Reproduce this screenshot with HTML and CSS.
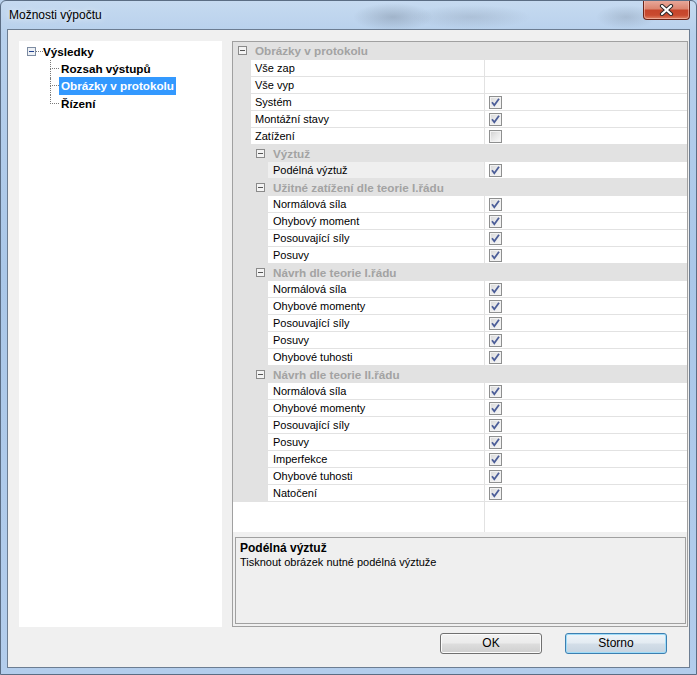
FILE: index.html
```html
<!DOCTYPE html>
<html lang="cs">
<head>
<meta charset="utf-8">
<title>Možnosti výpočtu</title>
<link rel="stylesheet" href="styles.css">
</head>
<body>
<div class="window">
  <div class="titlebar">
    <span class="title">Možnosti výpočtu</span>
    <div class="close">
      <svg width="15" height="12" viewBox="0 0 15 12"><path d="M3 2 L12 10 M12 2 L3 10" stroke="#2e2a2a" stroke-width="4.2" stroke-linecap="round"/><path d="M3 2 L12 10 M12 2 L3 10" stroke="#ffffff" stroke-width="2.2" stroke-linecap="round"/></svg>
    </div>
  </div>
  <div class="client">
    <div class="main">
      <div class="tree">
        <div class="node root">
          <span class="texp"><svg width="9" height="9" viewBox="0 0 9 9"><rect x="0.5" y="0.5" width="8" height="8" fill="#eef1f5" stroke="#7d8ca2"/><path d="M2 4.5 H7" stroke="#1f3f8e" stroke-width="1"/></svg></span>
          <span class="tconn"></span>
          <span class="tlabel">Výsledky</span>
        </div>
        <div class="children">
          <div class="node"><span class="branch"><i></i><i></i></span><span class="tlabel">Rozsah výstupů</span></div>
          <div class="node"><span class="branch"><i></i><i></i></span><span class="tlabel sel">Obrázky v protokolu</span></div>
          <div class="node last"><span class="branch"><i></i><i></i></span><span class="tlabel">Řízení</span></div>
        </div>
      </div>
      <div class="pg">
        <div class="view">
          <div class="row cat first"><span class="exp"><svg width="9" height="9" viewBox="0 0 9 9"><rect x="0.5" y="0.5" width="8" height="8" fill="#f3f3f3" stroke="#8a8a8a"/><path d="M2 4.5 H7" stroke="#555" stroke-width="1"/></svg></span><span class="clabel">Obrázky v protokolu</span></div>
          <div class="row"><span class="gut"></span><span class="lab">Vše zap</span><span class="val"></span></div>
          <div class="row"><span class="gut"></span><span class="lab">Vše vyp</span><span class="val"></span></div>
          <div class="row"><span class="gut"></span><span class="lab">Systém</span><span class="val"><span class="cb on"><svg width="11" height="11" viewBox="0 0 11 11"><path d="M2 5.3 L4.3 8.3 L9 1.8" fill="none" stroke="#4b5d98" stroke-width="1.8"/></svg></span></span></div>
          <div class="row"><span class="gut"></span><span class="lab">Montážní stavy</span><span class="val"><span class="cb on"><svg width="11" height="11" viewBox="0 0 11 11"><path d="M2 5.3 L4.3 8.3 L9 1.8" fill="none" stroke="#4b5d98" stroke-width="1.8"/></svg></span></span></div>
          <div class="row"><span class="gut"></span><span class="lab">Zatížení</span><span class="val"><span class="cb"></span></span></div>

          <div class="row cat l1"><span class="exp"><svg width="9" height="9" viewBox="0 0 9 9"><rect x="0.5" y="0.5" width="8" height="8" fill="#f3f3f3" stroke="#8a8a8a"/><path d="M2 4.5 H7" stroke="#555" stroke-width="1"/></svg></span><span class="clabel">Výztuž</span></div>
          <div class="row l2"><span class="gut"></span><span class="lab selrow">Podélná výztuž</span><span class="val"><span class="cb on"><svg width="11" height="11" viewBox="0 0 11 11"><path d="M2 5.3 L4.3 8.3 L9 1.8" fill="none" stroke="#4b5d98" stroke-width="1.8"/></svg></span></span></div>

          <div class="row cat l1"><span class="exp"><svg width="9" height="9" viewBox="0 0 9 9"><rect x="0.5" y="0.5" width="8" height="8" fill="#f3f3f3" stroke="#8a8a8a"/><path d="M2 4.5 H7" stroke="#555" stroke-width="1"/></svg></span><span class="clabel">Užitné zatížení dle teorie I.řádu</span></div>
          <div class="row l2"><span class="gut"></span><span class="lab">Normálová síla</span><span class="val"><span class="cb on"><svg width="11" height="11" viewBox="0 0 11 11"><path d="M2 5.3 L4.3 8.3 L9 1.8" fill="none" stroke="#4b5d98" stroke-width="1.8"/></svg></span></span></div>
          <div class="row l2"><span class="gut"></span><span class="lab">Ohybový moment</span><span class="val"><span class="cb on"><svg width="11" height="11" viewBox="0 0 11 11"><path d="M2 5.3 L4.3 8.3 L9 1.8" fill="none" stroke="#4b5d98" stroke-width="1.8"/></svg></span></span></div>
          <div class="row l2"><span class="gut"></span><span class="lab">Posouvající síly</span><span class="val"><span class="cb on"><svg width="11" height="11" viewBox="0 0 11 11"><path d="M2 5.3 L4.3 8.3 L9 1.8" fill="none" stroke="#4b5d98" stroke-width="1.8"/></svg></span></span></div>
          <div class="row l2"><span class="gut"></span><span class="lab">Posuvy</span><span class="val"><span class="cb on"><svg width="11" height="11" viewBox="0 0 11 11"><path d="M2 5.3 L4.3 8.3 L9 1.8" fill="none" stroke="#4b5d98" stroke-width="1.8"/></svg></span></span></div>

          <div class="row cat l1"><span class="exp"><svg width="9" height="9" viewBox="0 0 9 9"><rect x="0.5" y="0.5" width="8" height="8" fill="#f3f3f3" stroke="#8a8a8a"/><path d="M2 4.5 H7" stroke="#555" stroke-width="1"/></svg></span><span class="clabel">Návrh dle teorie I.řádu</span></div>
          <div class="row l2"><span class="gut"></span><span class="lab">Normálová síla</span><span class="val"><span class="cb on"><svg width="11" height="11" viewBox="0 0 11 11"><path d="M2 5.3 L4.3 8.3 L9 1.8" fill="none" stroke="#4b5d98" stroke-width="1.8"/></svg></span></span></div>
          <div class="row l2"><span class="gut"></span><span class="lab">Ohybové momenty</span><span class="val"><span class="cb on"><svg width="11" height="11" viewBox="0 0 11 11"><path d="M2 5.3 L4.3 8.3 L9 1.8" fill="none" stroke="#4b5d98" stroke-width="1.8"/></svg></span></span></div>
          <div class="row l2"><span class="gut"></span><span class="lab">Posouvající síly</span><span class="val"><span class="cb on"><svg width="11" height="11" viewBox="0 0 11 11"><path d="M2 5.3 L4.3 8.3 L9 1.8" fill="none" stroke="#4b5d98" stroke-width="1.8"/></svg></span></span></div>
          <div class="row l2"><span class="gut"></span><span class="lab">Posuvy</span><span class="val"><span class="cb on"><svg width="11" height="11" viewBox="0 0 11 11"><path d="M2 5.3 L4.3 8.3 L9 1.8" fill="none" stroke="#4b5d98" stroke-width="1.8"/></svg></span></span></div>
          <div class="row l2"><span class="gut"></span><span class="lab">Ohybové tuhosti</span><span class="val"><span class="cb on"><svg width="11" height="11" viewBox="0 0 11 11"><path d="M2 5.3 L4.3 8.3 L9 1.8" fill="none" stroke="#4b5d98" stroke-width="1.8"/></svg></span></span></div>

          <div class="row cat l1"><span class="exp"><svg width="9" height="9" viewBox="0 0 9 9"><rect x="0.5" y="0.5" width="8" height="8" fill="#f3f3f3" stroke="#8a8a8a"/><path d="M2 4.5 H7" stroke="#555" stroke-width="1"/></svg></span><span class="clabel">Návrh dle teorie II.řádu</span></div>
          <div class="row l2"><span class="gut"></span><span class="lab">Normálová síla</span><span class="val"><span class="cb on"><svg width="11" height="11" viewBox="0 0 11 11"><path d="M2 5.3 L4.3 8.3 L9 1.8" fill="none" stroke="#4b5d98" stroke-width="1.8"/></svg></span></span></div>
          <div class="row l2"><span class="gut"></span><span class="lab">Ohybové momenty</span><span class="val"><span class="cb on"><svg width="11" height="11" viewBox="0 0 11 11"><path d="M2 5.3 L4.3 8.3 L9 1.8" fill="none" stroke="#4b5d98" stroke-width="1.8"/></svg></span></span></div>
          <div class="row l2"><span class="gut"></span><span class="lab">Posouvající síly</span><span class="val"><span class="cb on"><svg width="11" height="11" viewBox="0 0 11 11"><path d="M2 5.3 L4.3 8.3 L9 1.8" fill="none" stroke="#4b5d98" stroke-width="1.8"/></svg></span></span></div>
          <div class="row l2"><span class="gut"></span><span class="lab">Posuvy</span><span class="val"><span class="cb on"><svg width="11" height="11" viewBox="0 0 11 11"><path d="M2 5.3 L4.3 8.3 L9 1.8" fill="none" stroke="#4b5d98" stroke-width="1.8"/></svg></span></span></div>
          <div class="row l2"><span class="gut"></span><span class="lab">Imperfekce</span><span class="val"><span class="cb on"><svg width="11" height="11" viewBox="0 0 11 11"><path d="M2 5.3 L4.3 8.3 L9 1.8" fill="none" stroke="#4b5d98" stroke-width="1.8"/></svg></span></span></div>
          <div class="row l2"><span class="gut"></span><span class="lab">Ohybové tuhosti</span><span class="val"><span class="cb on"><svg width="11" height="11" viewBox="0 0 11 11"><path d="M2 5.3 L4.3 8.3 L9 1.8" fill="none" stroke="#4b5d98" stroke-width="1.8"/></svg></span></span></div>
          <div class="row l2"><span class="gut"></span><span class="lab">Natočení</span><span class="val"><span class="cb on"><svg width="11" height="11" viewBox="0 0 11 11"><path d="M2 5.3 L4.3 8.3 L9 1.8" fill="none" stroke="#4b5d98" stroke-width="1.8"/></svg></span></span></div>

          <div class="filler"><span class="fl"></span><span class="fr"></span></div>
        </div>
        <div class="desc">
          <div class="dt">Podélná výztuž</div>
          <div class="dd">Tisknout obrázek nutné podélná výztuže</div>
        </div>
      </div>
    </div>
    <div class="buttons">
      <div class="btn">OK</div>
      <div class="btn default">Storno</div>
    </div>
  </div>
</div>
</body>
</html>
```

FILE: styles.css
```css
html, body {
  margin: 0;
  padding: 0;
  background: #b9d1ec;
}

.window {
  width: 697px;
  height: 675px;
  box-sizing: border-box;
  border: 1px solid #5b6d84;
  border-radius: 6px 6px 0 0;
  display: flex;
  flex-direction: column;
  background:
    radial-gradient(ellipse 40px 14px at 392px 16px, rgba(70, 80, 95, 0.25), transparent),
    radial-gradient(ellipse 60px 12px at 470px 16px, rgba(90, 100, 115, 0.18), transparent),
    radial-gradient(ellipse 30px 12px at 625px 16px, rgba(80, 90, 105, 0.2), transparent),
    linear-gradient(180deg, #c6daf0 0%, #b7d0ec 5%, #aac7e8 40%, #b3cdec 100%);
  font-family: "Liberation Sans", Arial, sans-serif;
  overflow: hidden;
}

.titlebar {
  height: 28px;
  display: flex;
  align-items: center;
  padding-left: 8px;
  flex: none;
}

.title {
  font-size: 12px;
  color: #000;
  text-shadow: 0 0 6px rgba(255, 255, 255, 0.9);
}

.close {
  align-self: flex-start;
  margin: -1px 6px 0 auto;
  width: 47px;
  height: 20px;
  box-sizing: border-box;
  border: 1px solid #6b2418;
  border-top: none;
  border-radius: 0 0 4px 4px;
  background: linear-gradient(180deg, #e9ab9e 0%, #dc8671 45%, #c6452b 55%, #c94a2f 80%, #e08466 100%);
  box-shadow: inset 0 0 0 1px rgba(255, 210, 200, 0.5);
  display: flex;
  align-items: center;
  justify-content: center;
}

.client {
  flex: 1;
  margin: 0 6px 6px 6px;
  border: 1px solid #6c7d92;
  background: #f0f0f0;
  display: flex;
  flex-direction: column;
}

.main {
  display: flex;
  height: 586px;
  margin: 11px 1px 0 11px;
  gap: 10px;
}

/* ---------- tree ---------- */
.tree {
  width: 203px;
  flex: none;
  background: #fff;
  padding-top: 1.5px;
  box-sizing: border-box;
  font-size: 11.7px;
  font-weight: bold;
  color: #000;
}

.node {
  display: flex;
  align-items: center;
  height: 17.5px;
}

.root {
  padding-left: 8px;
}

.texp {
  display: flex;
  width: 9px;
  height: 9px;
}

.tconn {
  width: 7px;
  height: 0;
  border-top: 1px dotted #7a7a7a;
  margin-top: 1px;
}

.tlabel {
  padding: 0 2px;
  line-height: 17px;
  white-space: nowrap;
}

.tlabel.sel {
  background: #3399ff;
  color: #fff;
  height: 18px;
  line-height: 18px;
}

.root .tlabel {
  padding-left: 0;
}

.children {
  margin-left: 31px;
}

.branch {
  width: 9px;
  align-self: stretch;
  display: grid;
  grid-template-rows: 1fr 1fr;
  flex: none;
}

.branch i {
  display: block;
  border-left: 1px dotted #7a7a7a;
}

.branch i:first-child {
  border-bottom: 1px dotted #7a7a7a;
}

.last .branch i:last-child {
  border-left: none;
}

/* ---------- property grid ---------- */
.pg {
  flex: 1;
  border: 1px solid #a0a0a0;
  background: #f0f0f0;
  display: flex;
  flex-direction: column;
}

.view {
  background: #fff;
  height: 490px;
  flex: none;
  font-size: 11px;
  color: #000;
}

.row {
  display: flex;
  height: 17px;
  box-sizing: border-box;
  border-top: 1px solid #e2e2e2;
}

.row.first {
  border-top: none;
}

.cat {
  background: #e2e2e2;
  align-items: center;
}

.exp {
  display: flex;
  width: 9px;
  height: 9px;
  margin-left: 5px;
}

.cat.l1 .exp {
  margin-left: 23px;
}

.clabel {
  margin-left: 8px;
  font-weight: bold;
  font-size: 11.7px;
  color: #a3a3a3;
  white-space: nowrap;
}

.gut {
  width: 18px;
  flex: none;
  background: #e2e2e2;
}

.l2 .gut {
  width: 35px;
}

.lab {
  flex: 1;
  background: #fff;
  line-height: 16px;
  padding-left: 4px;
  white-space: nowrap;
}

.l2 .lab {
  padding-left: 5px;
}

.lab.selrow {
  background: #efefef;
}

.val {
  width: 203px;
  flex: none;
  box-sizing: border-box;
  border-left: 1px solid #e2e2e2;
  background: #fff;
  display: flex;
  align-items: center;
  padding-left: 4px;
}

.cb {
  width: 13px;
  height: 13px;
  box-sizing: border-box;
  border: 1px solid #8e8f8f;
  background: linear-gradient(135deg, #cfcfcf 0%, #e6e6e6 45%, #fafafa 100%);
  box-shadow: inset 0 0 0 1px #f2f2f2;
  display: flex;
}

.cb.on {
  background: linear-gradient(135deg, #d6d6d6 0%, #ececec 50%, #f6f6f6 100%);
}

.filler {
  display: flex;
  height: 31px;
  box-sizing: border-box;
  border-top: 1px solid #e2e2e2;
}

.fl {
  width: 251px;
  flex: none;
}

.fr {
  flex: 1;
  border-left: 1px solid #e2e2e2;
}

.desc {
  margin: 5px 1px 0 2px;
  height: 87px;
  box-sizing: border-box;
  border: 1px solid #a0a0a0;
  background: #efefef;
  padding: 3px 4px 0 4px;
  color: #000;
}

.dt {
  font-size: 12px;
  font-weight: bold;
  line-height: 14px;
}

.dd {
  font-size: 11px;
  line-height: 14px;
}

/* ---------- buttons ---------- */
.buttons {
  display: flex;
  justify-content: flex-end;
  gap: 23px;
  margin-top: 6px;
  padding-right: 22px;
}

.btn {
  width: 102px;
  height: 21px;
  box-sizing: border-box;
  border: 1px solid #707070;
  border-radius: 3px;
  background: linear-gradient(180deg, #f2f2f2 0%, #ebebeb 48%, #dddddd 52%, #cfcfcf 100%);
  box-shadow: inset 0 0 0 1px #fbfbfb;
  font-size: 12px;
  line-height: 19px;
  text-align: center;
  color: #000;
}

.btn.default {
  border-color: #3c7fb1;
  background: linear-gradient(180deg, #eef4f9 0%, #e3ebf2 48%, #d3dee8 52%, #c6d4e1 100%);
  box-shadow: inset 0 0 0 1px #9fdcf8;
}
```
